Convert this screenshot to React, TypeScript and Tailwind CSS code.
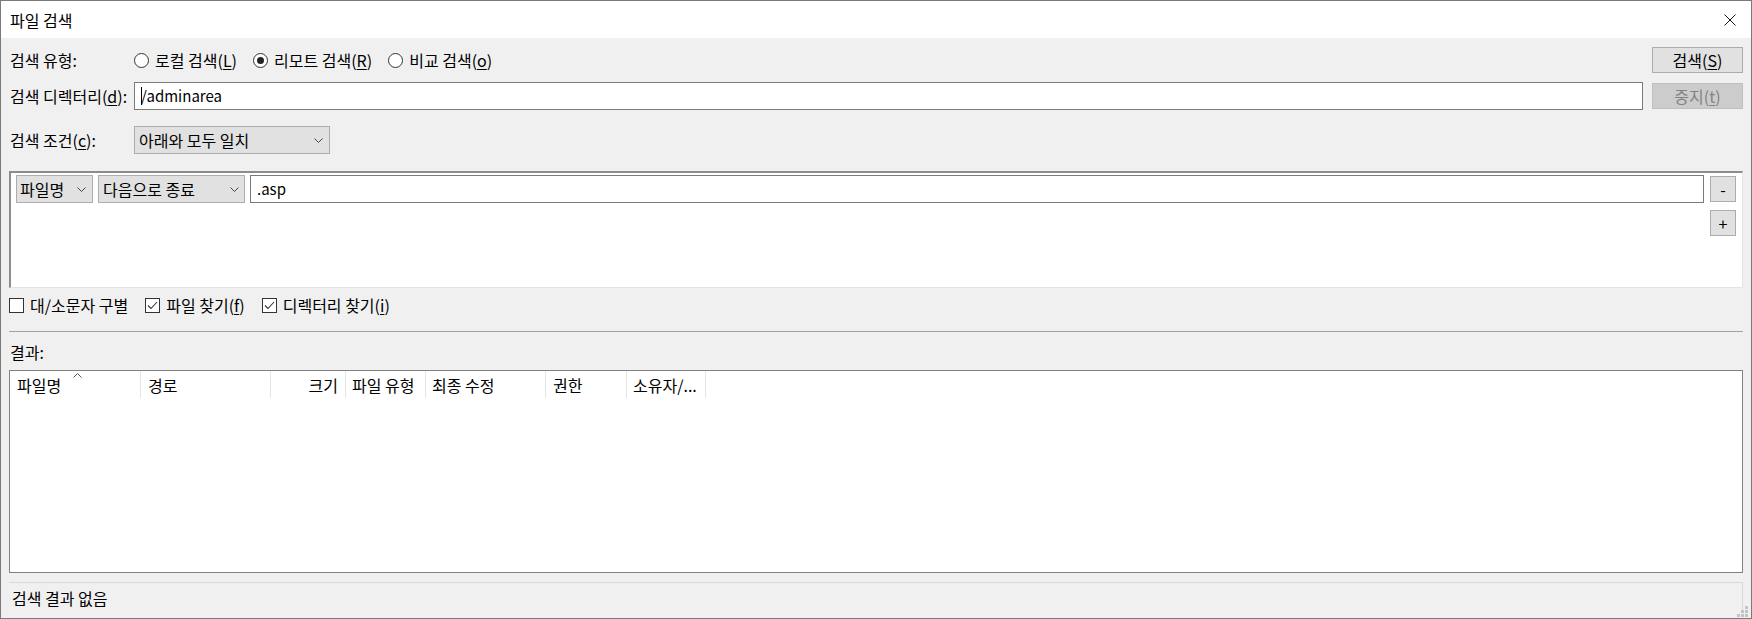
import React from "react";

function Chevron() {
  return (
    <svg width="9" height="5" viewBox="0 0 9 5" className="shrink-0">
      <path d="M0.5 0.5 L4.5 4.5 L8.5 0.5" fill="none" stroke="#444" strokeWidth="1" />
    </svg>
  );
}

function Radio({ checked, children }: { checked?: boolean; children: React.ReactNode }) {
  return (
    <div className="flex items-center">
      <div className="w-[15px] h-[15px] rounded-full border border-[#333] bg-white flex items-center justify-center">
        {checked && <div className="w-[7px] h-[7px] rounded-full bg-[#222]" />}
      </div>
      <span className="ml-[6px]">{children}</span>
    </div>
  );
}

function Check({ checked, children }: { checked?: boolean; children: React.ReactNode }) {
  return (
    <div className="flex items-center">
      <div className="w-[15px] h-[15px] border border-[#333] bg-white flex items-center justify-center">
        {checked && (
          <svg width="13" height="13" viewBox="0 0 13 13">
            <path d="M2 6.5 L5 9.5 L11 3" fill="none" stroke="#333" strokeWidth="1.1" />
          </svg>
        )}
      </div>
      <span className="ml-[6px]">{children}</span>
    </div>
  );
}

function U({ children }: { children: React.ReactNode }) {
  return <span className="underline underline-offset-2">{children}</span>;
}

export default function App() {
  return (
    <div className="w-[1752px] h-[619px] border border-[#7a7a7a] bg-[#f0f0f0] flex flex-col font-['Noto_Sans_CJK_KR',sans-serif] text-[16px] leading-[20px] text-black overflow-hidden">
      {/* Title bar */}
      <div className="h-[37px] bg-white flex items-center justify-between pl-[9px] pr-[15px] shrink-0">
        <span>파일 검색</span>
        <svg width="12" height="12" viewBox="0 0 12 12">
          <path d="M0.5 0.5 L11.5 11.5 M11.5 0.5 L0.5 11.5" stroke="#111" strokeWidth="1" />
        </svg>
      </div>

      <div className="flex-1 flex flex-col px-[8px]">
        {/* Row 1 */}
        <div className="mt-[9px] flex items-center h-[26px]">
          <div className="w-[125px] pl-[1px]">검색 유형:</div>
          <div className="flex-1 flex items-center gap-[16px]">
            <Radio>
              로컬 검색(<U>L</U>)
            </Radio>
            <Radio checked>
              리모트 검색(<U>R</U>)
            </Radio>
            <Radio>
              비교 검색(<U>o</U>)
            </Radio>
          </div>
          <div className="w-[91px] h-[26px] bg-[#e1e1e1] border border-[#adadad] flex items-center justify-center">
            <span>
              검색(<U>S</U>)
            </span>
          </div>
        </div>

        {/* Row 2 */}
        <div className="mt-[9px] flex items-center h-[28px]">
          <div className="w-[125px] pl-[1px]">
            검색 디렉터리(<U>d</U>):
          </div>
          <div className="flex-1 mr-[9px] h-[28px] bg-white border border-[#7a7a7a] flex items-center pl-[6px]">
            <span className="inline-block w-px h-[18px] bg-black" />
            <span className="ml-[-1px] text-[15px]">/adminarea</span>
          </div>
          <div className="w-[91px] h-[26px] bg-[#cccccc] border border-[#bfbfbf] flex items-center justify-center text-[#838383]">
            <span>
              중지(<U>t</U>)
            </span>
          </div>
        </div>

        {/* Row 3 */}
        <div className="mt-[16px] flex items-center h-[28px]">
          <div className="w-[125px] pl-[1px]">
            검색 조건(<U>c</U>):
          </div>
          <div className="w-[196px] h-[28px] bg-[#e1e1e1] border border-[#adadad] flex items-center justify-between pl-[4px] pr-[6px]">
            <span>아래와 모두 일치</span>
            <Chevron />
          </div>
        </div>

        {/* Condition panel */}
        <div className="mt-[17px] h-[117px] border-t-2 border-l-2 border-t-[#8c8c8c] border-l-[#8c8c8c] border-b border-r border-b-[#e3e3e3] border-r-[#e3e3e3] bg-white flex pl-[5px] pr-[6px] pt-[2px]">
          <div className="flex-1 flex items-start gap-[5px]">
            <div className="w-[77px] h-[28px] bg-[#e1e1e1] border border-[#adadad] flex items-center justify-between pl-[3px] pr-[6px]">
              <span>파일명</span>
              <Chevron />
            </div>
            <div className="w-[147px] h-[28px] bg-[#e1e1e1] border border-[#adadad] flex items-center justify-between pl-[4px] pr-[5px]">
              <span>다음으로 종료</span>
              <Chevron />
            </div>
            <div className="flex-1 h-[28px] bg-white border border-[#7a7a7a] flex items-center pl-[6px]">
              <span className="text-[15px]">.asp</span>
            </div>
          </div>
          <div className="ml-[6px] mt-[1px] flex flex-col gap-[8px]">
            <div className="w-[26px] h-[26px] bg-[#e1e1e1] border border-[#adadad] flex items-center justify-center">
              <span className="leading-none">-</span>
            </div>
            <div className="w-[26px] h-[26px] bg-[#e1e1e1] border border-[#adadad] flex items-center justify-center">
              <span className="leading-none">+</span>
            </div>
          </div>
        </div>

        {/* Checkboxes */}
        <div className="mt-[8px] h-[18px] flex items-center gap-[17px]">
          <Check>대/소문자 구별</Check>
          <Check checked>
            파일 찾기(<U>f</U>)
          </Check>
          <Check checked>
            디렉터리 찾기(<U>i</U>)
          </Check>
        </div>

        {/* Separator */}
        <div className="mt-[17px] h-px bg-[#a0a0a0]" />

        {/* Results label */}
        <div className="mt-[10px] h-[20px] pl-[1px] flex items-center">결과:</div>

        {/* Results list */}
        <div className="mt-[8px] h-[203px] bg-white border border-[#828282]">
          <div className="flex h-[27px] items-stretch">
            <div className="relative w-[131px] border-r border-[#e5e5e5] pl-[7px] flex items-center">
              <span>파일명</span>
              <svg className="absolute left-[63px] top-[2px]" width="9" height="5" viewBox="0 0 9 5">
                <path d="M0.5 4.5 L4.5 0.5 L8.5 4.5" fill="none" stroke="#555" strokeWidth="1" />
              </svg>
            </div>
            <div className="w-[130px] border-r border-[#e5e5e5] pl-[7px] flex items-center">경로</div>
            <div className="w-[75px] border-r border-[#e5e5e5] pr-[7px] flex items-center justify-end">크기</div>
            <div className="w-[80px] border-r border-[#e5e5e5] pl-[6px] flex items-center whitespace-nowrap">파일 유형</div>
            <div className="w-[120px] border-r border-[#e5e5e5] pl-[6px] flex items-center">최종 수정</div>
            <div className="w-[81px] border-r border-[#e5e5e5] pl-[7px] flex items-center">권한</div>
            <div className="w-[79px] border-r border-[#e5e5e5] pl-[6px] flex items-center whitespace-nowrap">소유자/...</div>
          </div>
        </div>

        {/* Status bar */}
        <div className="mt-[9px] relative flex-1">
          <div className="h-[31px] border-t border-r border-[#d9d9d9] flex items-center pl-[3px]">
            검색 결과 없음
          </div>
          <svg className="absolute right-[-5px] bottom-[1px]" width="11" height="11" viewBox="0 0 11 11">
            <rect x="8" y="0" width="3" height="3" fill="#c3c3c3" />
            <rect x="4" y="4" width="3" height="3" fill="#c3c3c3" />
            <rect x="8" y="4" width="3" height="3" fill="#c3c3c3" />
            <rect x="0" y="8" width="3" height="3" fill="#c3c3c3" />
            <rect x="4" y="8" width="3" height="3" fill="#c3c3c3" />
            <rect x="8" y="8" width="3" height="3" fill="#c3c3c3" />
          </svg>
        </div>
      </div>
    </div>
  );
}
